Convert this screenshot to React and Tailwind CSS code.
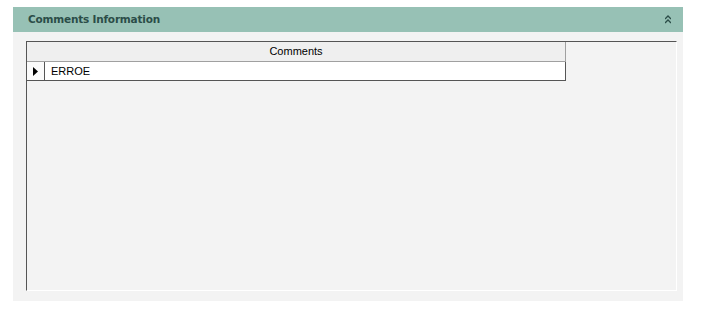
export default function App() {
  return (
    <div className="w-[701px] h-[310px] bg-white relative" style={{ fontFamily: '"Liberation Sans", Arial, sans-serif' }}>
      <div className="pt-[7px] pl-[13px]">
        <div className="w-[670px] h-[294px] flex flex-col bg-[#f3f3f3]">
          <div className="h-[25px] bg-[#97c1b5] flex items-center justify-between pl-[15px] pr-[12px]">
            <span className="font-bold text-[#2b4d48] leading-none" style={{ fontFamily: '"DejaVu Sans", Verdana, sans-serif', fontSize: '10.5px', letterSpacing: '-0.2px' }}>Comments Information</span>
            <svg width="6" height="9" viewBox="0 0 6 9" className="text-[#2b4d48]">
              <path d="M0 4 L3 1 L6 4 M0 8 L3 5 L6 8" fill="none" stroke="currentColor" strokeWidth="1.3" />
            </svg>
          </div>
          <div className="pt-[9px] pl-[13px] pb-[10px]">
            <div className="w-[651px] h-[250px] border-t border-l border-t-[#555] border-l-[#555] border-r border-b border-r-white border-b-white">
              <div className="w-[539px]">
                <div className="h-[20px] bg-[#efefef] border-b border-r border-[#a0a0a0] flex items-center justify-center text-[11px] text-black">
                  Comments
                </div>
                <div className="h-[19px] flex border-b border-r border-[#555] bg-white">
                  <div className="w-[18px] border-r border-[#555] bg-[#fafafa] flex items-center pl-[6px]">
                    <svg width="5" height="9" viewBox="0 0 5 9"><path d="M0 0 L5 4.5 L0 9 Z" fill="#000" /></svg>
                  </div>
                  <div className="flex-1 flex items-center pl-[6px] text-[11px] text-black">ERROE</div>
                </div>
              </div>
            </div>
          </div>
        </div>
      </div>
    </div>
  );
}
